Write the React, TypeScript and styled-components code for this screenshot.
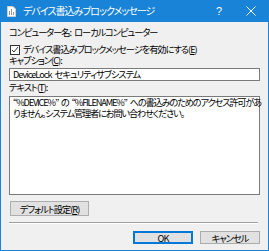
import * as React from 'react';
import styled, { createGlobalStyle } from 'styled-components';

const GlobalStyle = createGlobalStyle`
  html, body {
    margin: 0;
    padding: 0;
    background: #f0f0f0;
  }
  body {
    font-family: "Noto Sans CJK JP", "Noto Sans", sans-serif;
    font-size: 9.2px;
    font-feature-settings: "palt";
    letter-spacing: -1px;
    word-spacing: 2px;
    color: #000;
  }
`;

const Window = styled.div`
  width: 269px;
  height: 251px;
  box-sizing: border-box;
  border: 1px solid #1883d7;
  border-top: none;
  background: #f0f0f0;
  display: flex;
  flex-direction: column;
  overflow: hidden;
`;

const TitleBar = styled.div`
  height: 22px;
  flex: none;
  background: #1883d7;
  color: #fff;
  display: flex;
  align-items: center;
  padding-left: 6px;
`;

const TitleText = styled.span`
  margin-left: 7px;
  flex: 1;
  white-space: nowrap;
  line-height: 12px;
  font-size: 10px;
  letter-spacing: -0.95px;
`;

const TitleButton = styled.div<{ $w: number }>`
  width: ${p => p.$w}px;
  height: 22px;
  display: flex;
  align-items: center;
  justify-content: center;
  font-family: "Liberation Sans", sans-serif;
  font-size: 11px;
  letter-spacing: 0;
`;

const Body = styled.div`
  padding: 0 8px;
  display: flex;
  flex-direction: column;
`;

const Label = styled.div<{ $top?: number }>`
  margin-top: ${p => p.$top ?? 0}px;
  height: 11px;
  line-height: 11px;
  white-space: nowrap;
`;

const CheckRow = styled.label`
  margin-top: 6px;
  height: 11px;
  display: flex;
  align-items: center;
  gap: 3px;
  white-space: nowrap;
  line-height: 11px;
`;

const Box = styled.span`
  width: 10px;
  height: 10px;
  box-sizing: border-box;
  border: 1px solid #333;
  background: #fff;
  display: flex;
  align-items: center;
  justify-content: center;
  margin-left: 1px;
`;

const Field = styled.div<{ $h: number; $top: number; $tight?: boolean }>`
  margin-top: ${p => p.$top}px;
  height: ${p => p.$h}px;
  box-sizing: border-box;
  border: 1px solid #7a7a7a;
  background: #fff;
  padding: 0 3px;
  line-height: 11px;
  white-space: nowrap;
  letter-spacing: ${p => (p.$tight ? '-1.15px' : '-1px')};
`;

const Button = styled.div<{ $default?: boolean; $w: number; $h: number }>`
  width: ${p => p.$w}px;
  height: ${p => p.$h}px;
  box-sizing: border-box;
  border: 1px solid ${p => (p.$default ? '#0078d7' : '#adadad')};
  box-shadow: ${p => (p.$default ? 'inset 0 0 0 1px #0078d7' : 'none')};
  background: #e1e1e1;
  display: flex;
  align-items: center;
  justify-content: center;
  white-space: nowrap;
  line-height: 12px;
`;

const DefaultRow = styled.div`
  margin-top: 6px;
  padding-left: 1px;
`;

const Separator = styled.div`
  margin-top: 6px;
  height: 1px;
  width: 249px;
  background: #a0a0a0;
  border-bottom: 1px solid #fff;
`;

const Footer = styled.div`
  margin-top: 7px;
  display: flex;
  justify-content: flex-end;
  gap: 7px;
`;

function DocIcon() {
  return (
    <svg width="9" height="11" viewBox="0 0 9 11">
      <path d="M0.5 0.5h5.5l2.5 2.5v7.5h-8z" fill="#fff" stroke="#d0d0d0" />
      <rect x="2" y="5" width="1" height="4" fill="#9a9a9a" />
      <rect x="4" y="3" width="1" height="6" fill="#9a9a9a" />
      <rect x="6" y="6" width="1" height="3" fill="#9a9a9a" />
    </svg>
  );
}

export default function App() {
  return (
    <>
      <GlobalStyle />
      <Window>
        <TitleBar>
          <DocIcon />
          <TitleText>デバイス書込みブロックメッセージ</TitleText>
          <TitleButton $w={30}>?</TitleButton>
          <TitleButton $w={34}>
            <svg width="10" height="10" viewBox="0 0 10 10">
              <path d="M0.5 0.5l9 9M9.5 0.5l-9 9" stroke="#fff" strokeWidth="1" />
            </svg>
          </TitleButton>
        </TitleBar>
        <Body>
          <Label $top={5}>コンピューター名: ローカルコンピューター</Label>
          <CheckRow>
            <Box>
              <svg width="8" height="8" viewBox="0 0 8 8">
                <path d="M1 4l2 2 4-5" fill="none" stroke="#333" strokeWidth="1" />
              </svg>
            </Box>
            <span>
              デバイス書込みブロックメッセージを有効にする(<u>E</u>)
            </span>
          </CheckRow>
          <Label $top={0}>
            キャプション(<u>C</u>):
          </Label>
          <Field $top={2} $h={13}>DeviceLock セキュリティサブシステム</Field>
          <Label $top={1}>
            テキスト(<u>T</u>):
          </Label>
          <Field $top={3} $h={99} $tight>
            “%DEVICE%” の “%FILENAME%” への書込みのためのアクセス許可があ
            <br />
            りません。システム管理者にお問い合わせください。
          </Field>
          <DefaultRow>
            <Button $w={79} $h={15}>
              デフォルト設定(<u>R</u>)
            </Button>
          </DefaultRow>
          <Separator />
          <Footer>
            <Button $w={60} $h={13} $default>
              OK
            </Button>
            <Button $w={60} $h={13}>
              キャンセル
            </Button>
          </Footer>
        </Body>
      </Window>
    </>
  );
}
